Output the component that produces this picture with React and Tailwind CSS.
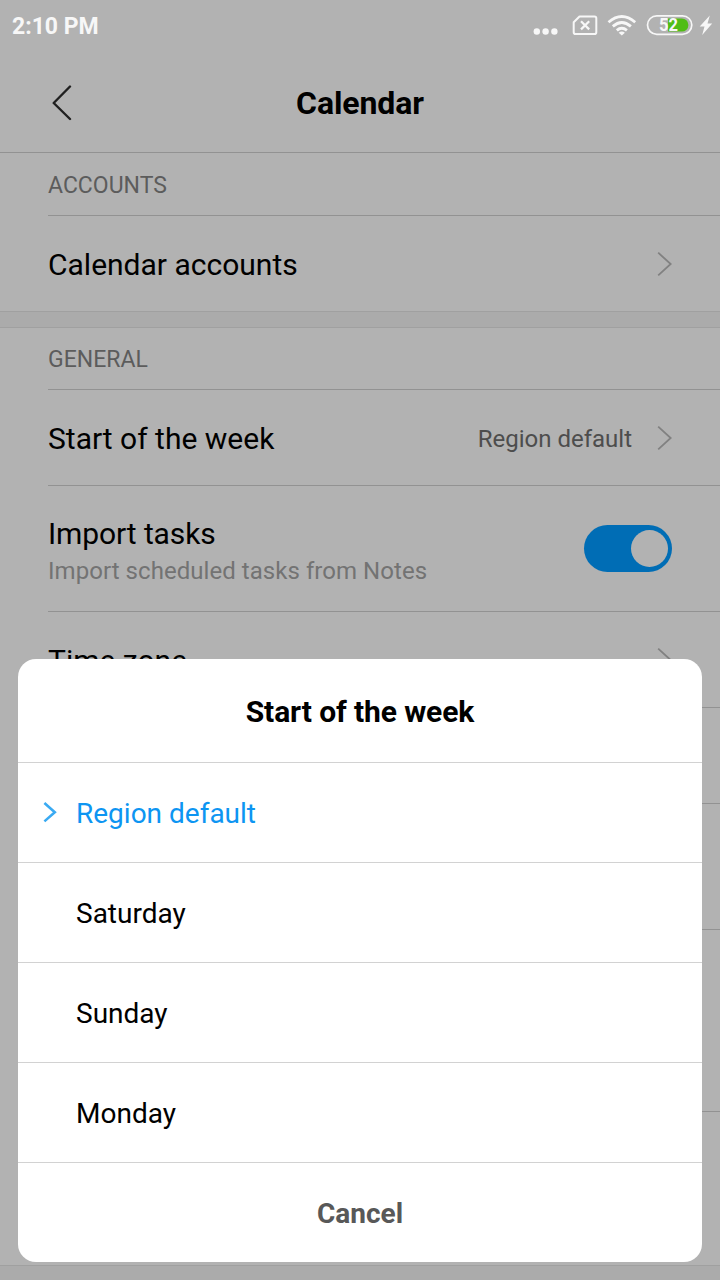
import React from "react";

function Chevron() {
  return (
    <svg className="h-6 w-[15px] shrink-0" viewBox="0 0 15 24" fill="none" stroke="#818181" strokeWidth="1.8">
      <path d="M1.2 .7 13.7 12 1.2 23.3" />
    </svg>
  );
}

function StatusBar() {
  return (
    <div className="flex h-[52px] items-center justify-between pr-[7px] pl-3 text-[#f7f7f7]">
      <span className="pt-px text-[23px] leading-none font-bold">2:10 PM</span>
      <svg className="h-[52px] w-[184px]" viewBox="529 0 184 52" fill="none">
        <g fill="#f7f7f7">
          <circle cx="536.8" cy="31.5" r="3.2" />
          <circle cx="545.6" cy="31.5" r="3.2" />
          <circle cx="554.4" cy="31.5" r="3.2" />
        </g>
        <path d="M579.5 16.5H594.5Q596.3 16.5 596.3 18.3V32.2Q596.3 34 594.5 34H575.5Q573.7 34 573.7 32.2V22.3Z" stroke="#f7f7f7" strokeWidth="2" strokeLinejoin="round" />
        <path d="M581 21.2l8.2 8.2M589.2 21.2l-8.2 8.2" stroke="#f7f7f7" strokeWidth="2.2" />
        <g stroke="#f7f7f7" strokeWidth="2.8">
          <path d="M608.5 22.2Q621.8 10.8 635.2 22.2" />
          <path d="M612.8 26.4Q621.8 18.6 630.9 26.4" />
          <path d="M616.8 30.4Q621.8 26.2 626.9 30.4" />
        </g>
        <path d="M618.7 32.7Q621.8 30.3 624.9 32.7L621.8 35.6Z" fill="#f7f7f7" />
        <path d="M668 18.4H681.8A6.6 6.6 0 0 1 681.8 31.6H668Z" fill="#50bd14" />
        <rect x="647.5" y="15.8" width="44.3" height="18.6" rx="9.3" stroke="#f7f7f7" strokeWidth="1.7" />
        <text x="659" y="31.4" textLength="19" lengthAdjust="spacingAndGlyphs" fill="#f7f7f7" className="text-[18.5px] font-bold">52</text>
        <path d="M709.8 15.5 699.7 26.6H704.5L702.2 34.9 712.2 23.4H707.5Z" fill="#f7f7f7" />
      </svg>
    </div>
  );
}

function Section({ title, className }) {
  return (
    <div className={className}>
      <h2 className="ml-12 flex h-full items-center border-b border-[#929292] pt-1 text-[23px] text-[#5c5c5c]">{title}</h2>
    </div>
  );
}

function Row({ children, className }) {
  return <div className={"ml-12 flex items-center justify-between border-b border-[#929292] pr-12 " + className}>{children}</div>;
}

function Sheet() {
  return (
    <div className="absolute top-[659px] right-[18px] left-[18px] overflow-hidden rounded-[18px] bg-white">
      <h2 className="flex h-26 items-center justify-center border-b border-[#d2d2d2] pt-px text-[30px] font-bold tracking-[-0.1px] text-black">Start of the week</h2>
      <div className="flex h-25 items-center border-b border-[#d2d2d2] pl-[25px] text-[28px] text-[#0d95f2]">
        <svg className="mr-[18px] mb-0.5 h-[22px] w-[15px]" viewBox="0 0 15 22" fill="none" stroke="#3aaaf2" strokeWidth="2.6">
          <path d="M1.4 2 11.8 11.2 1.4 20.4" />
        </svg>
        <span className="pt-0.5">Region default</span>
      </div>
      {["Saturday", "Sunday", "Monday"].map((day) => (
        <div key={day} className="flex h-25 items-center border-b border-[#d2d2d2] pt-0.5 pl-[58px] text-[28px] text-black">{day}</div>
      ))}
      <div className="flex h-[99px] items-center justify-center pt-0.5 text-[28px] font-bold text-[#585858]">Cancel</div>
    </div>
  );
}

export default function App() {
  return (
    <div className="relative h-[1280px] w-[720px] overflow-hidden bg-[#b2b2b2] font-[Roboto,sans-serif] text-black">
      <header className="h-[153px] border-b border-[#929292]">
        <StatusBar />
        <div className="grid h-[101px] grid-cols-[1fr_auto_1fr] items-center pl-[50px]">
          <svg className="h-9 w-[22px]" viewBox="0 0 22 36" fill="none" stroke="#202020" strokeWidth="2.4" strokeLinecap="round" strokeLinejoin="round">
            <path d="M20 1.5 3.7 18 20 34" />
          </svg>
          <h1 className="-ml-[50px] text-[32px] font-bold tracking-[-0.1px]">Calendar</h1>
        </div>
      </header>
      <Section title="ACCOUNTS" className="h-[63px]" />
      <div className="flex h-24 items-center justify-between border-b border-[#a0a0a0] px-12 text-[30px]">
        <span className="pt-0.5">Calendar accounts</span>
        <Chevron />
      </div>
      <div className="h-4 border-b border-[#a0a0a0] bg-[#ababab]" />
      <Section title="GENERAL" className="h-[62px]" />
      <Row className="h-24">
        <span className="pt-0.5 text-[30px]">Start of the week</span>
        <span className="flex items-center gap-[25px] text-2xl text-[#4d4d4d]">
          <span className="pt-0.5">Region default</span>
          <Chevron />
        </span>
      </Row>
      <Row className="h-[126px]">
        <div className="pt-[5px]">
          <div className="text-[30px] leading-10 tracking-[-0.1px]">Import tasks</div>
          <div className="text-2xl leading-[34px] tracking-[0.05px] text-[#737373]">Import scheduled tasks from Notes</div>
        </div>
        <div className="flex h-[47px] w-22 items-center justify-end rounded-full bg-[#006db5] pr-1">
          <div className="size-[37px] rounded-full bg-[#b2b2b2]" />
        </div>
      </Row>
      <Row className="h-24">
        <span className="pt-0.5 text-[30px]">Time zone</span>
        <Chevron />
      </Row>
      <Row className="h-24" />
      <Row className="h-[126px]" />
      <Row className="h-[182px]" />
      <div className="h-[154px] border-b border-[#a0a0a0]" />
      <div className="h-[14px] bg-[#ababab]" />
      <Sheet />
    </div>
  );
}
